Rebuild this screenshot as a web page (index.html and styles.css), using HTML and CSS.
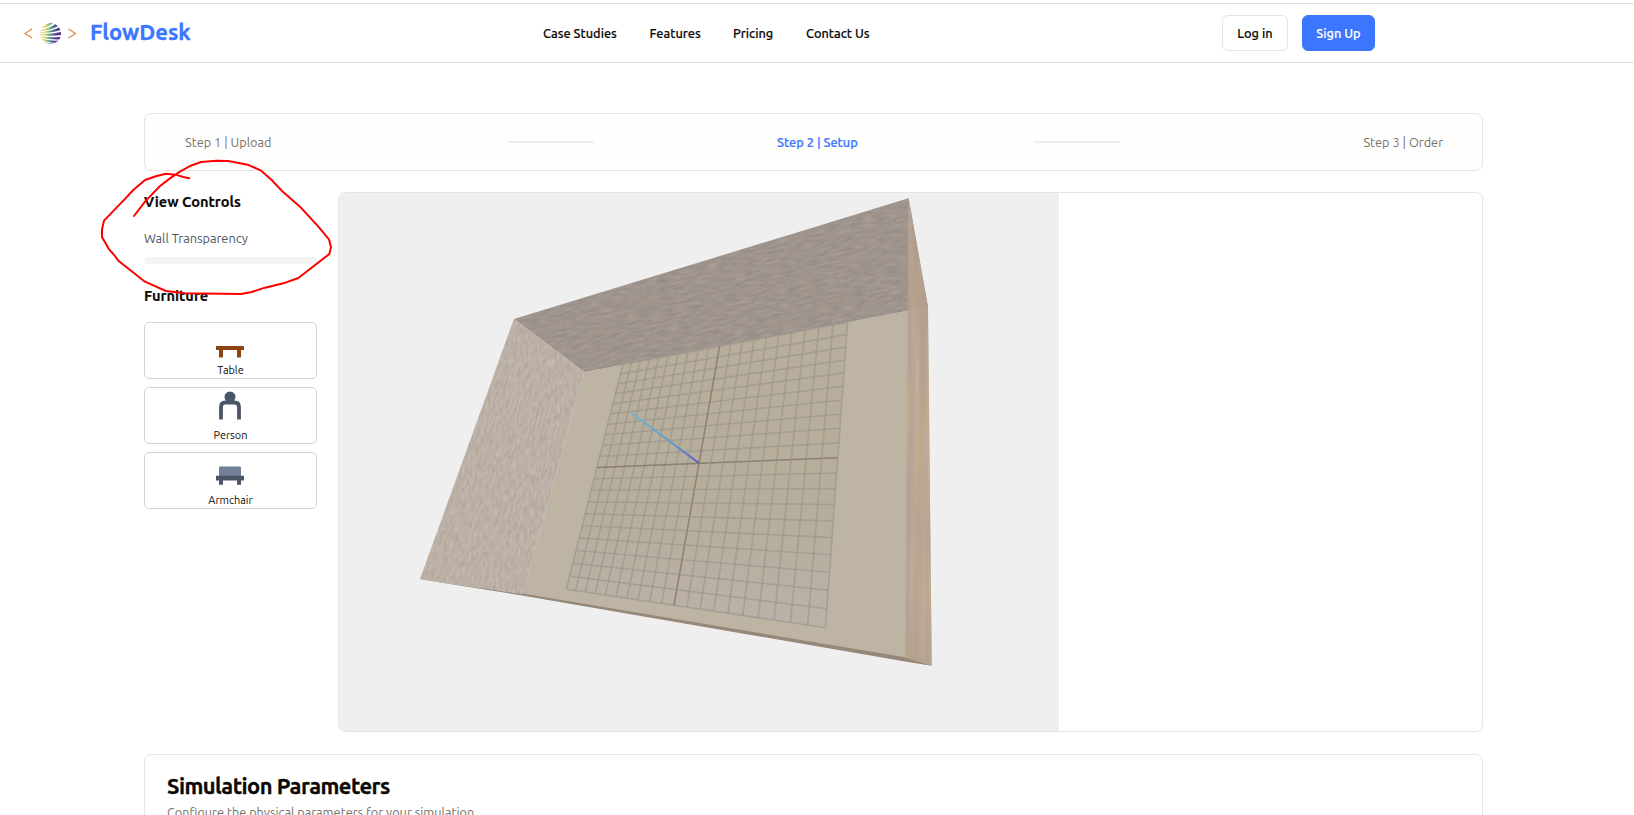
FILE: index.html
```html
<!DOCTYPE html>
<html lang="en">
<head>
<meta charset="utf-8">
<title>FlowDesk</title>
<link rel="stylesheet" href="styles.css">
</head>
<body>
<header class="header">
  <a class="brand">
    <svg class="brand-mark" width="54" height="24" viewBox="0 0 54 24">
      <defs>
        <linearGradient id="ball" gradientUnits="userSpaceOnUse" x1="17" x2="38" y1="10" y2="13">
          <stop offset="0" stop-color="#f5cdb0"/><stop offset=".22" stop-color="#e3dc62"/><stop offset=".45" stop-color="#5fb07c"/><stop offset=".68" stop-color="#4c56a0"/><stop offset="1" stop-color="#5c1a78"/>
        </linearGradient>
        <clipPath id="disc"><circle cx="27.500" cy="12.500" r="10.500"/></clipPath>
      </defs>
      <path d="M9 8 2 12.500 9 17M45.500 8l7 4.500-7 4.500" fill="none" stroke="#dd8a45" stroke-width="1.200"/>
      <g clip-path="url(#disc)" fill="url(#ball)">
        <path d="M16 7Q23 5 27 0L32 1Q25 6.500 16 8Z"/>
        <path d="M16 9.200Q27 7.500 33 2.500L36 4.500Q27 9.800 16 10Z"/>
        <path d="M16 11.200Q28 10.500 37 6L38 9Q28 12.200 16 12Z"/>
        <path d="M16 13Q28 13.600 38 11V14Q28 15.400 16 14Z"/>
        <path d="M16 15Q27 17 38 15.700L37 18.400Q27 18.800 16 16Z"/>
        <path d="M17 17Q26 20.300 36 19.600L34 22Q25 21.800 17 18Z"/>
        <path d="M19 19.500Q25 23 33 22.700L30 24.200Q22 24 19 20.500Z"/>
      </g>
    </svg>
    <span class="brand-name">FlowDesk</span>
  </a>
  <nav class="nav">
    <a class="n1">Case Studies</a><a class="n2">Features</a><a class="n3">Pricing</a><a class="n4">Contact Us</a>
  </nav>
  <div class="actions">
    <button class="btn btn-outline">Log in</button>
    <button class="btn btn-primary">Sign Up</button>
  </div>
</header>
<main class="main">
  <ol class="steps">
    <li class="step step-a">Step 1 | Upload</li>
    <li class="line"></li>
    <li class="step step-b active">Step 2 | Setup</li>
    <li class="line"></li>
    <li class="step step-c">Step 3 | Order</li>
  </ol>
  <div class="workspace">
    <aside class="sidebar">
      <h3 class="side-title t-view">View Controls</h3>
      <p class="side-label">Wall Transparency</p>
      <div class="slider"></div>
      <h3 class="side-title t-furn">Furniture</h3>
      <div class="items">
        <button class="item">
          <svg width="29" height="40" viewBox="0 0 29 40"><path d="M0 21h28v4H0zM3 25h4v7.500H3zM21 25h4v7.500h-4z" fill="#8b4513"/></svg>
          <span class="item-name">Table</span>
        </button>
        <button class="item">
          <svg width="29" height="40" viewBox="0 0 29 40"><circle cx="14" cy="7" r="5.500" fill="#4a5568"/><path d="M5 29.500V17q0-4.500 4.500-4.500h9q4.500 0 4.500 4.500v12.500" fill="none" stroke="#4a5568" stroke-width="3.800"/></svg>
          <span class="item-name">Person</span>
        </button>
        <button class="item">
          <svg width="29" height="40" viewBox="0 0 29 40"><rect x="3" y="11.500" width="22" height="11" rx="1" fill="#718096"/><path d="M0 20.800h28v4.700H0zM3 25.500h4v4.300H3zM21 25.500h4v4.300h-4z" fill="#4a5568"/></svg>
          <span class="item-name">Armchair</span>
        </button>
      </div>
    </aside>
    <section class="viewport">
      <svg class="scene" width="720" height="538" viewBox="339 193 720 538">
        <defs>
          <filter id="grain-back" x="0" y="0" width="100%" height="100%" color-interpolation-filters="sRGB">
            <feTurbulence type="fractalNoise" baseFrequency=".08 .4" numOctaves="3" seed="4"/>
            <feColorMatrix values=".7 0 0 0 .27  .55 0 .1 0 .26  .4 0 .3 0 .23  0 0 0 0 .2"/>
          </filter>
          <filter id="grain-left" x="0" y="0" width="100%" height="100%" color-interpolation-filters="sRGB">
            <feTurbulence type="fractalNoise" baseFrequency=".45 .12" numOctaves="3" seed="9"/>
            <feColorMatrix values=".7 0 0 0 .39  .5 0 .2 0 .36  .3 0 .5 0 .28  0 0 0 0 .26"/>
          </filter>
          <filter id="grain-right" x="0" y="0" width="100%" height="100%" color-interpolation-filters="sRGB">
            <feTurbulence type="fractalNoise" baseFrequency=".15 .008" numOctaves="2" seed="2"/>
            <feColorMatrix values=".8 0 0 0 .32  .6 0 .2 0 .26  0 0 .8 0 .2  0 0 0 0 .14"/>
          </filter>
          <linearGradient id="mat" x1="0" y1="0" x2="0" y2="1"><stop offset="0" stop-color="#b8ae9b"/><stop offset=".6" stop-color="#b7ad9b"/><stop offset="1" stop-color="#bbb1a7"/></linearGradient>
          <linearGradient id="axis" gradientUnits="userSpaceOnUse" x1="631" y1="413" x2="698.500" y2="463"><stop offset="0" stop-color="#67b9cf"/><stop offset=".6" stop-color="#5b9ad0"/><stop offset="1" stop-color="#5856d0"/></linearGradient>
          <clipPath id="c-back"><path d="M514 319 908.600 198.300 928 307 584.500 372Z"/></clipPath>
          <clipPath id="c-left"><path d="M514 319 584.500 372 522.500 594.500 420 579.300Z"/></clipPath>
          <clipPath id="c-right"><path d="M908.600 198 927.900 307 931.700 665.700 905 657.500Z"/></clipPath>
        </defs>
        <path d="M584.500 372 928 307 931.700 665.700 522.500 594Z" fill="#beb4a3"/>
        <path d="M420 579.300 522.500 593.500 905 657.300 931.700 665.700 905 661.500 522 595.500Z" fill="#968778"/>
        <path d="M514 319 908.600 198.300 928 307 584.500 372Z" fill="#9f948b"/>
        <g clip-path="url(#c-back)"><rect x="480" y="170" width="480" height="300" transform="rotate(-12 700 300)" filter="url(#grain-back)"/></g>
        <path d="M514 319 584.500 372 522.500 594 420 579.300Z" fill="#bcaea3"/>
        <g clip-path="url(#c-left)"><rect x="380" y="290" width="240" height="340" transform="rotate(14 500 460)" filter="url(#grain-left)"/></g>
        <path d="M622.800 364.400 847.600 322.300 825.500 627.700 566.300 589.300Z" fill="url(#mat)"/>
        <g id="grid"></g>
        <path d="M631.500 413 698.500 462.700" stroke="url(#axis)" stroke-width="1.700"/>
        <path d="M908.600 198 927.900 307 931.700 665.700 905 657.500Z" fill="#b8a28f" fill-opacity=".85"/>
        <g clip-path="url(#c-right)"><rect x="900" y="190" width="36" height="480" filter="url(#grain-right)"/></g>
      </svg>
    </section>
  </div>
  <section class="panel">
    <h2 class="panel-title">Simulation Parameters</h2>
    <p class="panel-desc">Configure the physical parameters for your simulation</p>
  </section>
</main>
<svg class="scribble" width="300" height="220" viewBox="0 0 900 660"><path d="M132 348 165 305 210 258 240 235 270 215 300 198 333 186 380 182 415 183 473 194 512 211 545 240 575 272 630 320 685 380 717 418 723 442 718 462 625 534 580 550 525 563 485 576 453 582 285 580 228 573 165 545 85 482 70 462 57 448 36 411 36 388 42 362 100 302 130 270 165 240 200 228 228 221 257 224 280 231 298 235"/></svg>
<script src="grid.js"></script>
</body>
</html>
```
FILE: styles.css
```css
* { box-sizing: border-box; }
body {
  margin: 0;
  height: 815px;
  overflow: hidden;
  background: #fff;
  color: #0c0a09;
  font-family: Ubuntu, "Noto Sans", sans-serif;
  font-size: 12.750px;
}
h2, h3, p, ol { margin: 0; padding: 0; }
a, span, li, h2, h3, p, button { white-space: nowrap; }
.header {
  display: flex;
  align-items: center;
  height: 60px;
  margin-top: 3px;
  padding: 0 259px 0 23px;
  border-top: 1px solid #e0e0e0;
  border-bottom: 1px solid #e0e0e0;
}
.brand { display: flex; align-items: center; width: 520px; }
.brand-mark { margin-right: 13px; }
.brand-name {
  color: #3c76ff;
  font-size: 22px;
  font-weight: 700;
  line-height: 28px;
  margin-top: -3px;
  -webkit-text-stroke: 0.3px;
}
.nav { display: flex; flex: 1; font-weight: 500; -webkit-text-stroke: 0.15px; }
.n1 { width: 106.500px; }
.n2 { width: 83.500px; }
.n3 { width: 73px; }
.actions { display: flex; gap: 14px; margin-top: -1px; }
.btn {
  height: 36px;
  padding: 0;
  border: 1px solid #e5e5e5;
  border-radius: 6px;
  background: #fff;
  color: #0c0a09;
  font: inherit;
  font-weight: 500;
  -webkit-text-stroke: 0.15px;
}
.btn-outline { width: 66px; }
.btn-primary { width: 73px; border-color: #3c76ff; background: #3c76ff; color: #fff; }
.main { width: 1339px; margin: 50px 0 0 144px; }
.steps {
  display: flex;
  align-items: center;
  height: 58px;
  padding: 0 39px 0 40px;
  border: 1px solid #e5e5e4;
  border-radius: 7px;
  background: #fefefc;
  list-style: none;
  color: #79716b;
}
.step-a { width: 322px; }
.step-b { width: 440px; padding-left: 183px; }
.step-c { margin-left: auto; }
.active { color: #3c76ff; font-weight: 500; -webkit-text-stroke: 0.2px; }
.line { width: 87px; height: 2px; background: #efefee; }
.workspace { display: flex; gap: 21px; margin-top: 21px; }
.sidebar { width: 173px; }
.side-title { font-size: 14.600px; font-weight: 700; line-height: 20px; -webkit-text-stroke: 0.15px; }
.side-label { margin-top: 17px; color: #4b5563; line-height: 18px; }
.slider { height: 7px; margin-top: 10px; border-radius: 4px; background: #f4f4f3; }
.t-furn { margin-top: 22px; }
.items { display: flex; flex-direction: column; gap: 8px; margin-top: 16px; }
.item {
  display: flex;
  flex-direction: column;
  align-items: center;
  height: 57px;
  padding: 2px 0 0;
  border: 1px solid #d1d5db;
  border-radius: 5px;
  background: #fff;
  color: #0c0a09;
  font: inherit;
  font-size: 10.900px;
}
.item svg { flex: none; }
.item-name { line-height: 14px; margin-top: -2px; }
.viewport {
  flex: 1;
  height: 540px;
  border: 1px solid #e5e5e4;
  border-radius: 7px;
  overflow: hidden;
}
.scene { display: block; background: #efefef; }
.grid-line { stroke: #96928c; stroke-opacity: .6; stroke-width: 1.600; }
.grid-mid { stroke: #82786c; stroke-opacity: .85; stroke-width: 1.500; }
.panel {
  height: 90px;
  margin-top: 22px;
  padding: 17px 22px;
  border: 1px solid #e5e5e4;
  border-radius: 7px;
}
.panel-title {
  font-size: 21.900px;
  font-weight: 700;
  line-height: 28px;
  letter-spacing: -0.025em;
  -webkit-text-stroke: 0.3px;
}
.panel-desc { margin-top: 3px; color: #79716b; line-height: 18px; }
.scribble { position: absolute; left: 90px; top: 100px; }
.scribble path { fill: none; stroke: #f00; stroke-width: 6; stroke-linejoin: round; stroke-linecap: round; }
```
FILE: grid.js
```js
// Draws a 20 x 20 floor grid in perspective between four corner points.
const p0 = [622.8, 364.4], p1 = [847.6, 322.3], p2 = [825.5, 627.7], p3 = [566.3, 589.3];
const d1 = [p1[0] - p2[0], p1[1] - p2[1]];
const d2 = [p3[0] - p2[0], p3[1] - p2[1]];
const s = [p0[0] - p1[0] + p2[0] - p3[0], p0[1] - p1[1] + p2[1] - p3[1]];
const det = d1[0] * d2[1] - d2[0] * d1[1];
const g = (s[0] * d2[1] - d2[0] * s[1]) / det;
const h = (d1[0] * s[1] - s[0] * d1[1]) / det;
const project = (u, v) => [0, 1].map(k =>
  ((p1[k] - p0[k] + g * p1[k]) * u + (p3[k] - p0[k] + h * p3[k]) * v + p0[k]) / (g * u + h * v + 1));
const grid = document.getElementById("grid");
function addLine(a, b, name) {
  const line = document.createElementNS("http://www.w3.org/2000/svg", "line");
  line.setAttribute("x1", a[0]);
  line.setAttribute("y1", a[1]);
  line.setAttribute("x2", b[0]);
  line.setAttribute("y2", b[1]);
  line.setAttribute("class", name);
  grid.appendChild(line);
}
for (let i = 0; i <= 20; i++) {
  const t = i / 20;
  const name = i === 10 ? "grid-mid" : "grid-line";
  addLine(project(t, 0), project(t, 1), name);
  addLine(project(0, t), project(1, t), name);
}
```
